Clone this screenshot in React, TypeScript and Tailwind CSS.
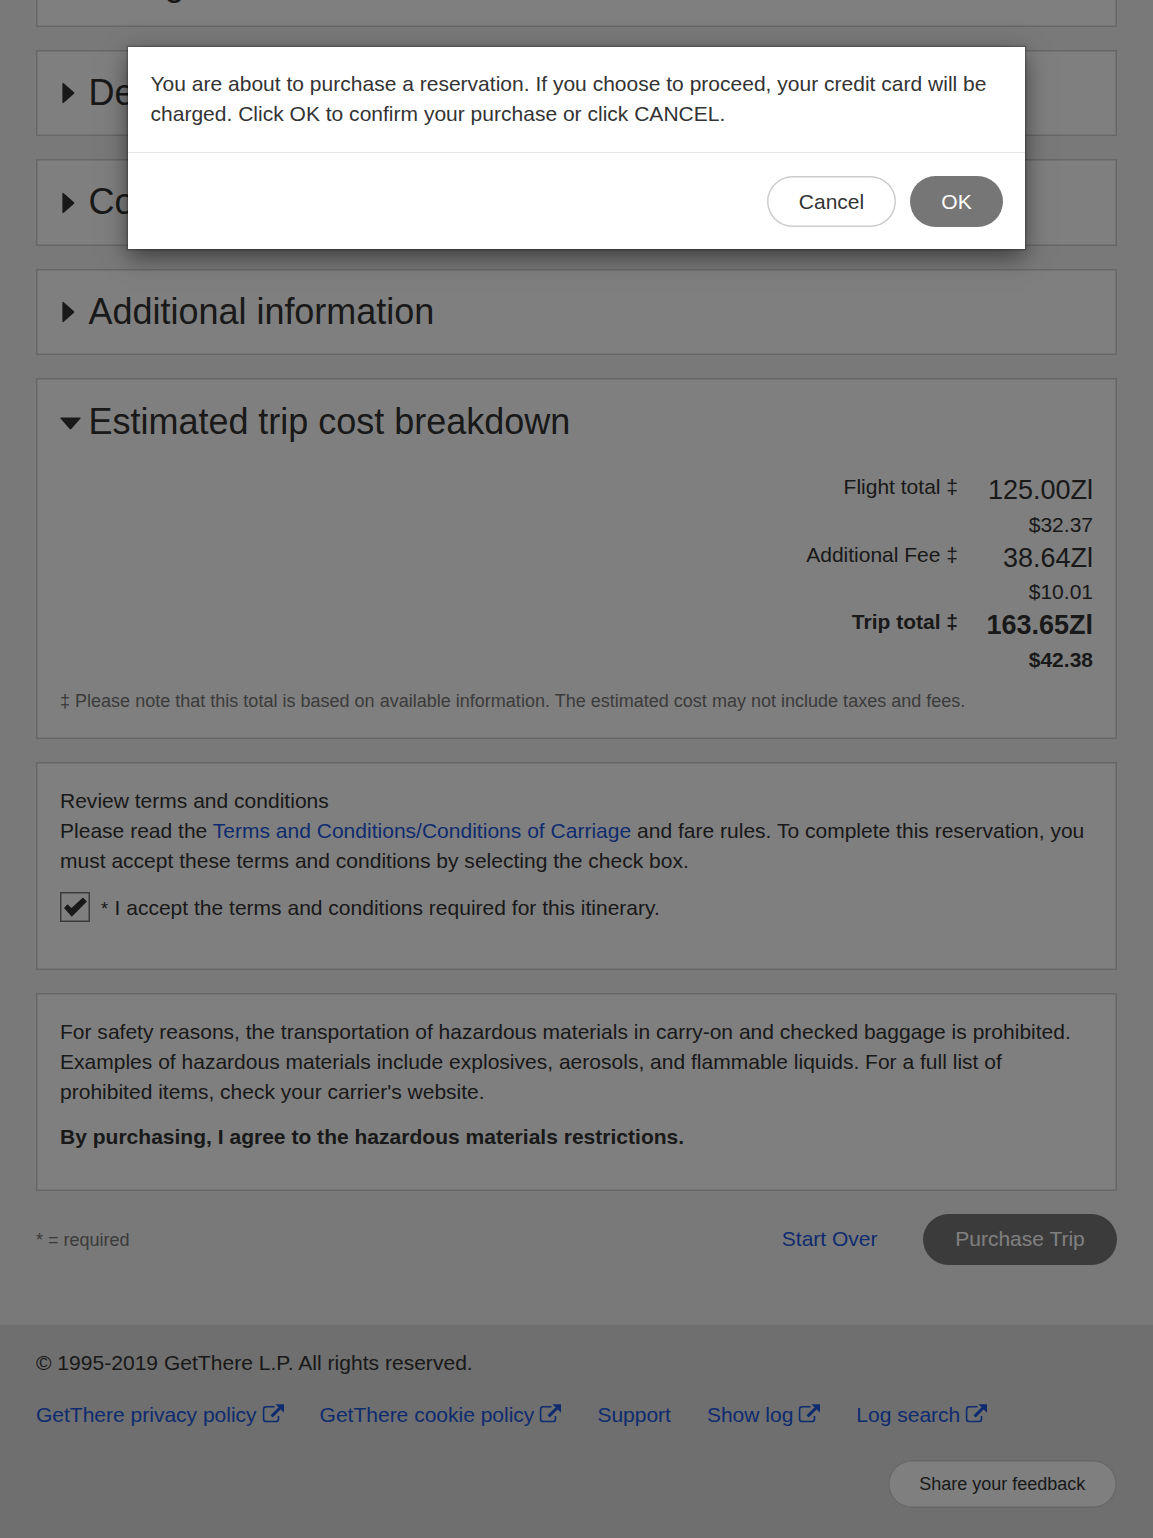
import React from "react";

const card =
  "w-full bg-white shadow-[inset_0_0_0_1.5px_#cecece] px-6";

function CaretRight() {
  return (
    <svg className="h-[21px] w-[13px] shrink-0 translate-y-[0.5px]" viewBox="0 0 13 21" fill="#333333">
      <path d="M0.4 1.2Q0.4 0 1.5 0.5L12 9.7Q12.7 10.5 12 11.3L1.5 20.5Q0.4 21 0.4 19.8Z" />
    </svg>
  );
}

function CaretDown() {
  return (
    <svg className="h-[13px] w-[21px] shrink-0 translate-y-[2px]" viewBox="0 0 21 13" fill="#333333">
      <path d="M1.2 0.4Q0 0.4 0.5 1.5L9.7 12Q10.5 12.7 11.3 12L20.5 1.5Q21 0.4 19.8 0.4Z" />
    </svg>
  );
}

function ExternalIcon() {
  return (
    <svg className="ml-[5px] h-[19px] w-[22px] shrink-0 -translate-y-[2px]" viewBox="0 0 22 19" fill="none">
      <path
        d="M12.5 2.8H4.2Q1.6 2.8 1.6 5.4V14.9Q1.6 17.5 4.2 17.5H13.9Q16.5 17.5 16.5 14.9V12"
        stroke="#1d57de"
        strokeWidth="1.6"
      />
      <path d="M9.6 12.4L18 4" stroke="#1d57de" strokeWidth="3" />
      <path d="M13.4 0.3H22V8.7Z" fill="#1d57de" />
    </svg>
  );
}

function Section({ title }: { title: string }) {
  return (
    <section className={`${card} flex h-[86.5px] items-center`}>
      <div className="ml-[2px] flex items-center">
        <CaretRight />
        <h2 className="ml-[13.5px] text-[36px] leading-[44px] tracking-[-0.02px]">{title}</h2>
      </div>
    </section>
  );
}

function Cost({ label, amount, usd, bold }: { label: string; amount: string; usd: string; bold?: boolean }) {
  return (
    <div className={bold ? "flex h-[67.5px] justify-end font-bold" : "flex h-[67.5px] justify-end"}>
      <div className="pt-px leading-[30px]">{label}</div>
      <div className="w-[135px] text-right">
        <div className="text-[27px] leading-[38px]">{amount}</div>
        <div className="pt-[0.5px] leading-[30px]">{usd}</div>
      </div>
    </div>
  );
}

function FooterLink({ text, external }: { text: string; external?: boolean }) {
  return (
    <a className="flex items-center whitespace-nowrap text-[#1d57de]">
      {text}
      {external && <ExternalIcon />}
    </a>
  );
}

export default function App() {
  return (
    <div className="relative h-[1538px] w-[1153px] overflow-hidden bg-[#f3f3f3] font-['Liberation_Sans',Arial,sans-serif] text-[21px] leading-[30px] text-[#333333]">
      <main className="-mt-[60px] flex h-[1385px] flex-col gap-[23px] px-9">
        <section className={`${card} flex h-[86.5px] shrink-0 items-center`}>
          <div className="ml-[2px] flex items-center">
            <CaretRight />
            <h2 className="ml-[13.5px] text-[36px] leading-[44px]">Billing</h2>
          </div>
        </section>
        <Section title="Delivery" />
        <Section title="Contact" />
        <Section title="Additional information" />
        <section className={`${card} h-[360.5px] pt-[21.5px]`}>
          <div className="flex items-center">
            <CaretDown />
            <h2 className="ml-[7.5px] text-[36px] leading-[44px] tracking-[-0.02px]">Estimated trip cost breakdown</h2>
          </div>
          <div className="mt-[27.5px]">
            <Cost label="Flight total ‡" amount="125.00Zl" usd="$32.37" />
            <Cost label="Additional Fee ‡" amount="38.64Zl" usd="$10.01" />
            <Cost label="Trip total ‡" amount="163.65Zl" usd="$42.38" bold />
          </div>
          <p className="mt-[14.5px] text-[18px] leading-[27px] tracking-[0.01px] text-[#767676]">
            ‡ Please note that this total is based on available information. The estimated cost may not include taxes and fees.
          </p>
        </section>
        <section className={`${card} h-[208px] pt-6`}>
          <p className="whitespace-nowrap tracking-[0.012px]">
            Review terms and conditions
            <br />
            Please read the <a className="text-[#1d57de]">Terms and Conditions/Conditions of Carriage</a> and fare rules. To
            complete this reservation, you
            <br />
            must accept these terms and conditions by selecting the check box.
          </p>
          <div className="mt-[16px] flex items-center">
            <div className="flex size-[30px] items-center justify-center bg-white shadow-[inset_0_0_0_1.5px_#767676]">
              <svg className="h-5 w-[23px] translate-y-[0.5px]" viewBox="0 0 23 20" fill="#333333">
                <path d="M0 10.5L3.5 6.8L7.5 10.6L18.9 0L22.9 4L7.8 19.3Z" />
              </svg>
            </div>
            <span className="ml-[11px] translate-y-[2px] text-[18px]">*</span>
            <span className="ml-[6.5px] translate-y-[0.5px] tracking-[0.01px]">
              I accept the terms and conditions required for this itinerary.
            </span>
          </div>
        </section>
        <section className={`${card} h-[198px] pt-6`}>
          <p className="whitespace-nowrap tracking-[0.01px]">
            For safety reasons, the transportation of hazardous materials in carry-on and checked baggage is prohibited.
            <br />
            Examples of hazardous materials include explosives, aerosols, and flammable liquids. For a full list of
            <br />
            prohibited items, check your carrier's website.
          </p>
          <p className="mt-[15px] font-bold tracking-[0.015px]">
            By purchasing, I agree to the hazardous materials restrictions.
          </p>
        </section>
        <div className="flex h-[51px] items-center">
          <span className="translate-y-[0.5px] text-[18px] text-[#767676]">* = required</span>
          <a className="ml-auto text-[#1d57de]">Start Over</a>
          <button className="ml-[45.5px] h-[51px] w-[194px] rounded-full bg-[#767676] text-white">Purchase Trip</button>
        </div>
      </main>
      <footer className="h-[213px] bg-[#dedede] px-9 pt-[23px]">
        <p className="tracking-[0.03px]">© 1995-2019 GetThere L.P. All rights reserved.</p>
        <nav className="mt-[22px] flex gap-9">
          <FooterLink text="GetThere privacy policy" external />
          <FooterLink text="GetThere cookie policy" external />
          <FooterLink text="Support" />
          <FooterLink text="Show log" external />
          <FooterLink text="Log search" external />
        </nav>
        <div className="mt-[30px] flex justify-end">
          <button className="h-12 w-[229.5px] rounded-full bg-white text-[18px] shadow-[inset_0_0_0_1.5px_#cecece]">
            Share your feedback
          </button>
        </div>
      </footer>
      <div className="absolute inset-0 flex items-start justify-center bg-black/50">
        <div
          role="dialog"
          className="mt-[46.5px] h-[202.5px] w-[897px] bg-white shadow-[0_0_0_1.5px_rgba(0,0,0,0.2),0_7.5px_22.5px_rgba(0,0,0,0.5)]"
        >
          <div className="h-[106px] border-b border-[#e5e5e5] px-[22.5px] pt-[22.5px]">
            <p className="whitespace-nowrap tracking-[0.01px]">
              You are about to purchase a reservation. If you choose to proceed, your credit card will be
              <br />
              charged. Click OK to confirm your purchase or click CANCEL.
            </p>
          </div>
          <div className="flex justify-end gap-[14px] px-[22px] pt-[23px]">
            <button className="h-[51px] w-[129px] rounded-full pt-px shadow-[inset_0_0_0_1.5px_#cccccc]">Cancel</button>
            <button className="h-[51px] w-[93px] rounded-full bg-[#767676] pt-px text-white">OK</button>
          </div>
        </div>
      </div>
    </div>
  );
}
